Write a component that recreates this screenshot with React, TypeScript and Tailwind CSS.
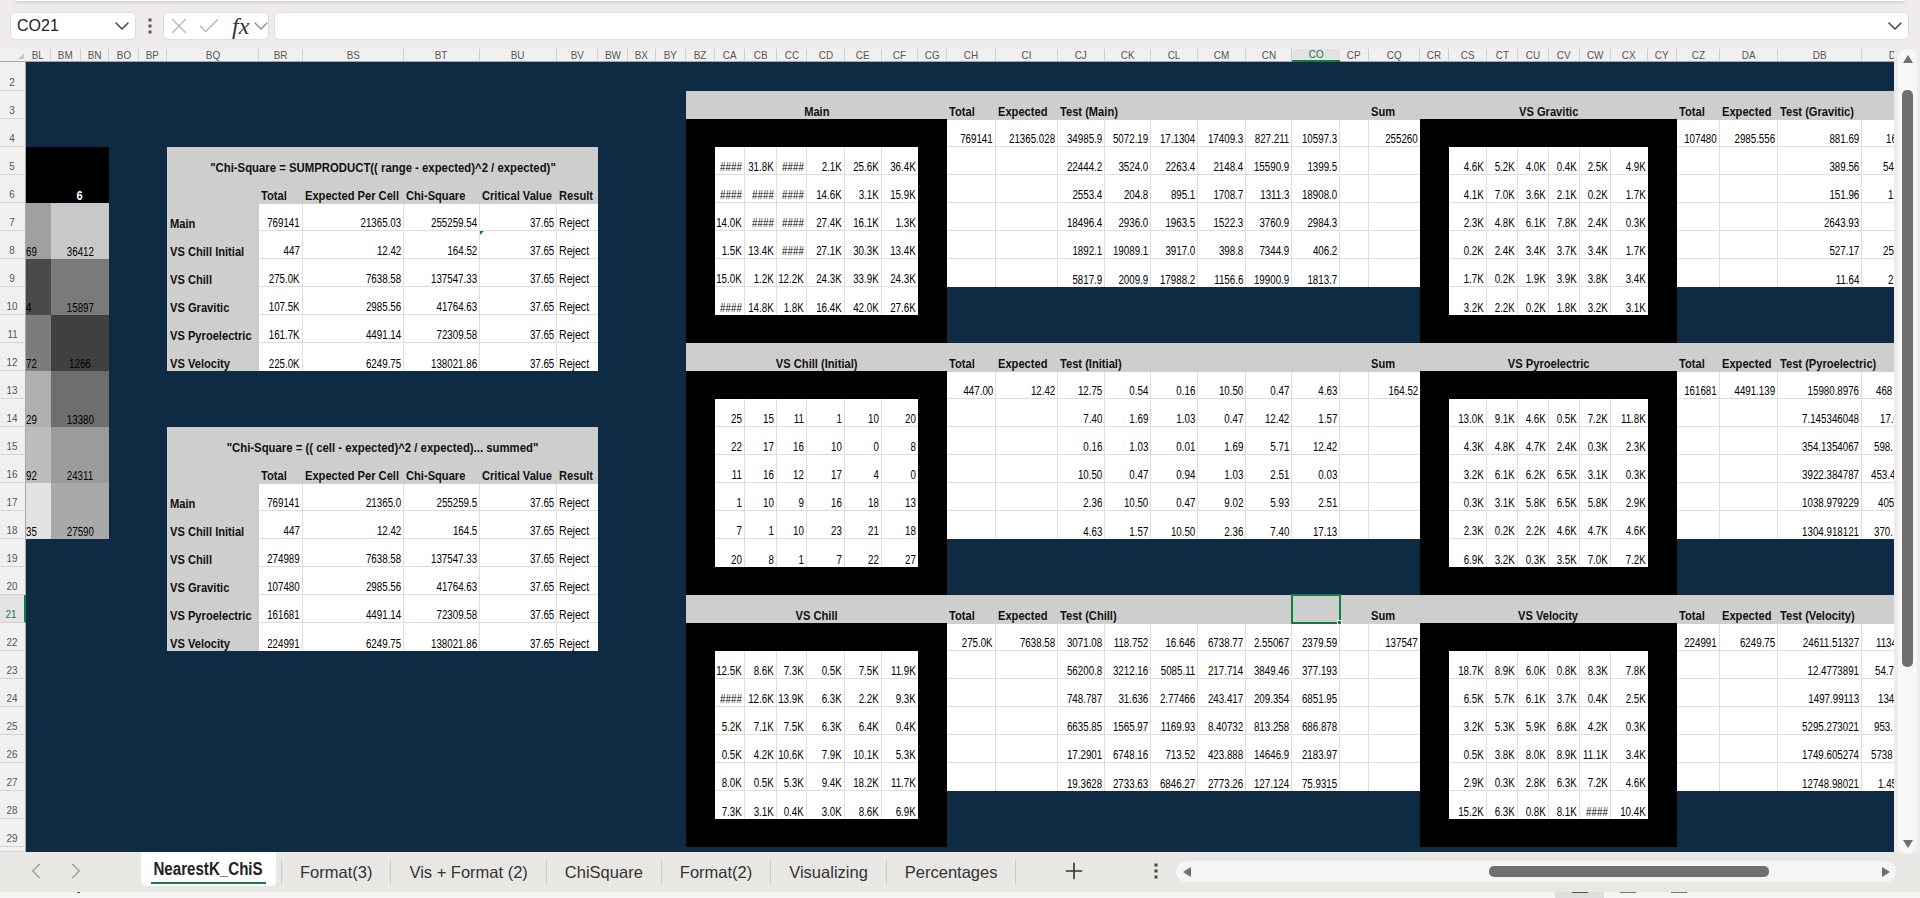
import React, { FC } from "react";
import { ChevronDown, ChevronLeft, ChevronRight, X, Check, Plus } from "lucide-react";

const cols = ["BL","BM","BN","BO","BP","BQ","BR","BS","BT","BU","BV","BW","BX","BY","BZ","CA","CB","CC","CD","CE","CF","CG","CH","CI","CJ","CK","CL","CM","CN","CO","CP","CQ","CR","CS","CT","CU","CV","CW","CX","CY","CZ","DA","DB","DC"];
const rowsList = Array.from({ length: 29 }, (_, i) => i + 2); // row 1 is scrolled away

type Kind = "blue" | "black" | "grey" | "white" | string;
interface Look {
  box: string;
  text: string;
}
interface CellData {
  kind: Kind;
  text?: string;
  look?: Look;
  span?: number;
}

// no condensed face is installed, so the narrow sheet font is squeezed with scale-x
const NUM: Look = { box: "justify-end pr-[2px] text-[12.5px] text-black", text: "origin-right scale-x-[0.78]" };
const LEFTNUM: Look = { box: "justify-start text-[12.5px] text-black", text: "origin-left scale-x-[0.78]" };
const REJECT: Look = { box: "justify-start pl-[2px] text-[12.5px] text-black", text: "origin-left scale-x-[0.85]" };
const MID: Look = { box: "justify-center text-[12.5px] text-black col-span-2", text: "origin-center scale-x-[0.78]" };
const MIDBOLD: Look = { box: "justify-center text-[13px] font-bold text-white col-span-2", text: "origin-center scale-x-[0.85]" };
const BOLD: Look = { box: "justify-start pl-[2px] font-bold text-[13px] text-[#111]", text: "origin-left scale-x-[0.856]" };
const ROWLABEL: Look = { box: "justify-start pl-[3px] font-bold text-[13px] text-[#111]", text: "origin-left scale-x-[0.856]" };
const TITLE: Look = { box: "justify-center font-bold text-[13px] text-[#111] col-span-6", text: "origin-center scale-x-[0.873]" };
const TITLE8: Look = { box: "justify-center font-bold text-[13px] text-[#111] col-span-8", text: "origin-center scale-x-[0.856]" };

const sheet = new Map<string, CellData>();
const at = (c: string, r: number) => c + r;
const colRange = (a: string, b: string) => cols.slice(cols.indexOf(a), cols.indexOf(b) + 1);

const fill = (a: string, b: string, r1: number, r2: number, kind: Kind) => {
  colRange(a, b).forEach((c) => {
    for (let r = r1; r <= r2; r++) sheet.set(at(c, r), { kind });
  });
};
const put = (c: string, r: number, text: string, look: Look = NUM, span?: number) => {
  const cell = sheet.get(at(c, r)) || { kind: "blue" };
  sheet.set(at(c, r), { ...cell, text, look, span });
};
const putRow = (start: string, r: number, values: string[]) => {
  const i = cols.indexOf(start);
  values.forEach((v, k) => put(cols[i + k], r, v));
};
const putGrid = (start: string, r: number, data: string) => {
  data.split("\n").forEach((line, k) => putRow(start, r + k, line.trim().split(/\s+/)));
};

// heat map strip on the left
fill("BL", "BN", 5, 6, "black");
put("BM", 6, "6", MIDBOLD, 2);
const heat: [string, string, string, string][] = [
  ["bg-[#a0a0a0]", "bg-[#c8c8c8]", "69", "36412"],
  ["bg-[#4a4a4a]", "bg-[#7a7a7a]", "4", "15897"],
  ["bg-[#7c7c7c]", "bg-[#404040]", "72", "1266"],
  ["bg-[#afafaf]", "bg-[#6e6e6e]", "29", "13380"],
  ["bg-[#bcbcbc]", "bg-[#9b9b9b]", "92", "24311"],
  ["bg-[#e2e2e2]", "bg-[#a9a9a9]", "35", "27590"],
];
heat.forEach((h, i) => {
  const r = 7 + i * 2;
  fill("BL", "BL", r, r + 1, h[0]);
  fill("BM", "BN", r, r + 1, h[1]);
  put("BL", r + 1, h[2], LEFTNUM);
  put("BM", r + 1, h[3], MID, 2);
});

// the two summary tables
const addSummary = (top: number, title: string, rows: string[][]) => {
  fill("BQ", "BV", top, top + 1, "grey");
  fill("BQ", "BQ", top + 2, top + 7, "grey");
  fill("BR", "BV", top + 2, top + 7, "white");
  put("BQ", top, title, TITLE, 6);
  ["Total", "Expected Per Cell", "Chi-Square", "Critical Value", "Result"].forEach((h, i) =>
    put(cols[cols.indexOf("BR") + i], top + 1, h, BOLD)
  );
  rows.forEach((row, i) => {
    const r = top + 2 + i;
    put("BQ", r, row[0], ROWLABEL);
    put("BR", r, row[1]);
    put("BS", r, row[2]);
    put("BT", r, row[3]);
    put("BU", r, "37.65");
    put("BV", r, "Reject", REJECT);
  });
};
addSummary(5, '"Chi-Square = SUMPRODUCT(( range - expected)^2 / expected)"', [
  ["Main", "769141", "21365.03", "255259.54"],
  ["VS Chill Initial", "447", "12.42", "164.52"],
  ["VS Chill", "275.0K", "7638.58", "137547.33"],
  ["VS Gravitic", "107.5K", "2985.56", "41764.63"],
  ["VS Pyroelectric", "161.7K", "4491.14", "72309.58"],
  ["VS Velocity", "225.0K", "6249.75", "138021.86"],
]);
addSummary(15, '"Chi-Square = (( cell - expected)^2 / expected)... summed"', [
  ["Main", "769141", "21365.0", "255259.5"],
  ["VS Chill Initial", "447", "12.42", "164.5"],
  ["VS Chill", "274989", "7638.58", "137547.33"],
  ["VS Gravitic", "107480", "2985.56", "41764.63"],
  ["VS Pyroelectric", "161681", "4491.14", "72309.58"],
  ["VS Velocity", "224991", "6249.75", "138021.86"],
]);

// the band of six blocks
const addBand = (head: number) => {
  fill("BZ", "DC", head, head, "grey");
  fill("BZ", "CG", head + 1, head + 8, "black");
  fill("CR", "CY", head + 1, head + 8, "black");
  fill("CA", "CF", head + 2, head + 7, "white");
  fill("CS", "CX", head + 2, head + 7, "white");
  fill("CH", "CQ", head + 1, head + 6, "white");
  fill("CZ", "DC", head + 1, head + 6, "white");
};
addBand(3);
addBand(12);
addBand(21);

const addHeads = (head: number, left: string, right: string, testL: string, testR: string) => {
  put("BZ", head, left, TITLE8, 8);
  put("CH", head, "Total", BOLD);
  put("CI", head, "Expected", BOLD);
  put("CJ", head, testL, BOLD);
  put("CQ", head, "Sum", BOLD);
  put("CR", head, right, TITLE8, 8);
  put("CZ", head, "Total", BOLD);
  put("DA", head, "Expected", BOLD);
  put("DB", head, testR, BOLD);
};
addHeads(3, "Main", "VS Gravitic", "Test (Main)", "Test (Gravitic)");
addHeads(12, "VS Chill (Initial)", "VS Pyroelectric", "Test (Initial)", "Test (Pyroelectric)");
addHeads(21, "VS Chill", "VS Velocity", "Test (Chill)", "Test (Velocity)");

putGrid("CA", 5, `#### 31.8K #### 2.1K 25.6K 36.4K
#### #### #### 14.6K 3.1K 15.9K
14.0K #### #### 27.4K 16.1K 1.3K
1.5K 13.4K #### 27.1K 30.3K 13.4K
15.0K 1.2K 12.2K 24.3K 33.9K 24.3K
#### 14.8K 1.8K 16.4K 42.0K 27.6K`);
putGrid("CJ", 4, `34985.9 5072.19 17.1304 17409.3 827.211 10597.3
22444.2 3524.0 2263.4 2148.4 15590.9 1399.5
2553.4 204.8 895.1 1708.7 1311.3 18908.0
18496.4 2936.0 1963.5 1522.3 3760.9 2984.3
1892.1 19089.1 3917.0 398.8 7344.9 406.2
5817.9 2009.9 17988.2 1156.6 19900.9 1813.7`);
putGrid("CS", 5, `4.6K 5.2K 4.0K 0.4K 2.5K 4.9K
4.1K 7.0K 3.6K 2.1K 0.2K 1.7K
2.3K 4.8K 6.1K 7.8K 2.4K 0.3K
0.2K 2.4K 3.4K 3.7K 3.4K 1.7K
1.7K 0.2K 1.9K 3.9K 3.8K 3.4K
3.2K 2.2K 0.2K 1.8K 3.2K 3.1K`);
putGrid("CA", 14, `25 15 11 1 10 20
22 17 16 10 0 8
11 16 12 17 4 0
1 10 9 16 18 13
7 1 10 23 21 18
20 8 1 7 22 27`);
putGrid("CJ", 13, `12.75 0.54 0.16 10.50 0.47 4.63
7.40 1.69 1.03 0.47 12.42 1.57
0.16 1.03 0.01 1.69 5.71 12.42
10.50 0.47 0.94 1.03 2.51 0.03
2.36 10.50 0.47 9.02 5.93 2.51
4.63 1.57 10.50 2.36 7.40 17.13`);
putGrid("CS", 14, `13.0K 9.1K 4.6K 0.5K 7.2K 11.8K
4.3K 4.8K 4.7K 2.4K 0.3K 2.3K
3.2K 6.1K 6.2K 6.5K 3.1K 0.3K
0.3K 3.1K 5.8K 6.5K 5.8K 2.9K
2.3K 0.2K 2.2K 4.6K 4.7K 4.6K
6.9K 3.2K 0.3K 3.5K 7.0K 7.2K`);
putGrid("CA", 23, `12.5K 8.6K 7.3K 0.5K 7.5K 11.9K
#### 12.6K 13.9K 6.3K 2.2K 9.3K
5.2K 7.1K 7.5K 6.3K 6.4K 0.4K
0.5K 4.2K 10.6K 7.9K 10.1K 5.3K
8.0K 0.5K 5.3K 9.4K 18.2K 11.7K
7.3K 3.1K 0.4K 3.0K 8.6K 6.9K`);
putGrid("CJ", 22, `3071.08 118.752 16.646 6738.77 2.55067 2379.59
56200.8 3212.16 5085.11 217.714 3849.46 377.193
748.787 31.636 2.77466 243.417 209.354 6851.95
6635.85 1565.97 1169.93 8.40732 813.258 686.878
17.2901 6748.16 713.52 423.888 14646.9 2183.97
19.3628 2733.63 6846.27 2773.26 127.124 75.9315`);
putGrid("CS", 23, `18.7K 8.9K 6.0K 0.8K 8.3K 7.8K
6.5K 5.7K 6.1K 3.7K 0.4K 2.5K
3.2K 5.3K 5.9K 6.8K 4.2K 0.3K
0.5K 3.8K 8.0K 8.9K 11.1K 3.4K
2.9K 0.3K 2.8K 6.3K 7.2K 4.6K
15.2K 6.3K 0.8K 8.1K #### 10.4K`);

put("CH", 4, "769141"); put("CI", 4, "21365.028"); put("CQ", 4, "255260");
put("CZ", 4, "107480"); put("DA", 4, "2985.556");
put("CH", 13, "447.00"); put("CI", 13, "12.42"); put("CQ", 13, "164.52");
put("CZ", 13, "161681"); put("DA", 13, "4491.139");
put("CH", 22, "275.0K"); put("CI", 22, "7638.58"); put("CQ", 22, "137547");
put("CZ", 22, "224991"); put("DA", 22, "6249.75");

["881.69", "389.56", "151.96", "2643.93", "527.17", "11.64"].forEach((v, i) => put("DB", 4 + i, v));
["15980.8976", "7.145346048", "354.1354067", "3922.384787", "1038.979229", "1304.918121"].forEach((v, i) => put("DB", 13 + i, v));
["24611.51327", "12.4773891", "1497.99113", "5295.273021", "1749.605274", "12748.98021"].forEach((v, i) => put("DB", 22 + i, v));

// DC is cut by the window, only the start of each number shows
const cut: [number, string, string][] = [
  [4, "16", "pl-[24px]"], [5, "54", "pl-[21px]"], [6, "1", "pl-[26px]"], [8, "25", "pl-[21px]"], [9, "2", "pl-[26px]"],
  [13, "468", "pl-[14px]"], [14, "17.0", "pl-[18px]"], [15, "598.", "pl-[12px]"], [16, "453.4", "pl-[9px]"], [17, "405", "pl-[16px]"], [18, "370.", "pl-[12px]"],
  [22, "1134", "pl-[14px]"], [23, "54.7", "pl-[13px]"], [24, "134", "pl-[16px]"], [25, "953.", "pl-[12px]"], [26, "5738", "pl-[9px]"], [27, "1.45", "pl-[16px]"],
];
cut.forEach(([r, v, pl]) => put("DC", r, v, { box: LEFTNUM.box + " " + pl, text: LEFTNUM.text }));

const isWhite = (c: string | undefined, r: number) => !!c && sheet.get(at(c, r))?.kind === "white";
const isGrey = (c: string, r: number) => sheet.get(at(c, r))?.kind === "grey";

const kindClass = (kind: Kind) => {
  if (kind === "blue") return "bg-[#0f2a43]";
  if (kind === "black") return "bg-black";
  if (kind === "grey") return "bg-[#cecece]";
  if (kind === "white") return "bg-white";
  return kind;
};

const Triangle: FC<{ dir: "up" | "down" | "left" | "right"; className?: string }> = ({ dir, className }) => {
  const points = { up: "5,1 10,9 0,9", down: "0,1 10,1 5,9", left: "9,0 9,10 1,5", right: "1,0 1,10 9,5" }[dir];
  return (
    <svg viewBox="0 0 10 10" className={className}>
      <polygon points={points} fill="#6f6f6f" />
    </svg>
  );
};

const Kebab: FC<{ color: string }> = ({ color }) => (
  <svg viewBox="0 0 4 16" className="w-[4px] h-[16px]">
    <rect x="0.5" y="0.5" width="3" height="3" fill={color} />
    <rect x="0.5" y="6.5" width="3" height="3" fill={color} />
    <rect x="0.5" y="12.5" width="3" height="3" fill={color} />
  </svg>
);

const SheetCell: FC<{ col: string; row: number }> = ({ col, row }) => {
  const cell = sheet.get(at(col, row)) || { kind: "blue" };
  const i = cols.indexOf(col);
  const lastCol = cols[i + (cell.span || 1) - 1];
  const white = cell.kind === "white";
  const right = white && isWhite(cols[cols.indexOf(lastCol) + 1], row) ? "border-r border-r-[#dedede]" : "";
  const bottom = white && isWhite(col, row + 1) ? "border-b border-b-[#dedede]" : "";
  const top = white && isGrey(col, row - 1) ? "border-t border-t-[#cecece]" : "";
  const selected = col === "CO" && row === 21;
  const flagged = col === "BU" && row === 8;
  return (
    <div
      className={`flex items-end leading-none whitespace-nowrap min-w-0 pb-[1px] ${kindClass(cell.kind)} ${right} ${bottom} ${top} ${cell.look?.box || ""} ${selected || flagged ? "relative" : ""}`}
    >
      {cell.text && <span className={`inline-block shrink-0 ${cell.look?.text || ""}`}>{cell.text}</span>}
      {selected && (
        <div className="absolute -inset-[1px] border-2 border-[#107c41] z-10">
          <div className="absolute -right-[3px] -bottom-[3px] w-[5px] h-[5px] bg-[#107c41] border border-white" />
        </div>
      )}
      {flagged && (
        <svg viewBox="0 0 4 4" className="absolute left-0 top-0 w-[4px] h-[4px]">
          <polygon points="0,0 4,0 0,4" fill="#107c41" />
        </svg>
      )}
    </div>
  );
};

const colHeadClass = (c: string) => {
  if (c === "CO") return "flex items-center justify-center text-[11px] leading-none bg-[#e3e3e3] text-[#107c41] border-b-2 border-b-[#107c41]";
  // DC is much wider than what is left of it on screen, so its name sits near the edge
  if (c === "DC") return "flex items-center justify-start pl-[26px] whitespace-nowrap text-[11px] leading-none bg-[#f0f0f0] text-[#555] border-b border-b-[#a6a6a6]";
  return "flex items-center justify-center text-[11px] leading-none bg-[#f0f0f0] text-[#555] border-r border-r-[#cfcfcf] border-b border-b-[#a6a6a6]";
};

const Sheet: FC = () => (
  <div className="grid w-[1894px] h-[803px] overflow-hidden shrink-0 grid-cols-[26px_25px_30px_28px_30px_28px_92px_44px_101px_76px_77px_41px_30px_28px_30px_29px_30px_32px_30px_38px_37px_36px_29px_49px_62px_47px_46px_47px_48px_46px_48px_29px_51px_29px_38px_31px_31px_31px_31px_37px_29px_43px_58px_84px_32px] grid-rows-[13px_29px_repeat(27,28px)_5px]">
    <div className="bg-[#f0f0f0] border-b border-b-[#a6a6a6] flex items-end justify-end">
      <svg viewBox="0 0 6 6" className="w-[6px] h-[6px] mb-[2px] mr-[2px]">
        <polygon points="6,0 6,6 0,6" fill="#c9c9c9" />
      </svg>
    </div>
    {cols.map((c) => (
      <div key={c} className={colHeadClass(c)}>
        <span className="inline-block shrink-0 scale-x-[0.9]">{c}</span>
      </div>
    ))}
    {rowsList.map((r) => (
      <React.Fragment key={r}>
        <div
          className={
            r === 21
              ? "flex items-end justify-center pb-[2px] pr-[2px] text-[11px] leading-none bg-[#e3e3e3] text-[#107c41] border-r-2 border-r-[#107c41] border-b border-b-[#cfcfcf]"
              : "flex items-end justify-center pb-[2px] text-[11px] leading-none bg-[#f0f0f0] text-[#555] border-r border-r-[#a6a6a6] border-b border-b-[#d4d4d4]"
          }
        >
          {r <= 29 ? <span className="inline-block scale-x-[0.9]">{r}</span> : ""}
        </div>
        {cols.map((c, i) => {
          // cells covered by a merged title or value on the left are not drawn
          for (let k = 1; k <= 7; k++) {
            const left = cols[i - k] && sheet.get(at(cols[i - k], r));
            if (left && left.span && left.span > k) return null;
          }
          return <SheetCell key={c} col={c} row={r} />;
        })}
      </React.Fragment>
    ))}
  </div>
);

const tabNames = ["Format(3)", "Vis + Format (2)", "ChiSquare", "Format(2)", "Visualizing", "Percentages"];

const TabBar: FC = () => (
  <div className="flex h-[40px] shrink-0 bg-[#e9e7e4]">
    <div className="flex w-[1050px] shrink-0">
      <div className="flex w-[141px] shrink-0 items-center h-[38px]">
        <ChevronLeft className="w-[26px] h-[26px] shrink-0 text-[#9a9a9a] ml-[23px]" strokeWidth={1.25} />
        <ChevronRight className="w-[26px] h-[26px] shrink-0 text-[#9a9a9a] ml-[14px]" strokeWidth={1.25} />
      </div>
      <div className="w-[135px] h-[34px] bg-white rounded-b-[5px] flex flex-col items-center shrink-0">
        <div className="text-[18px] leading-none mt-[8px] font-bold text-[#222] border-b-2 border-b-[#107c41] w-[115px] h-[24px] flex justify-center whitespace-nowrap">
          <span className="inline-block shrink-0 scale-x-[0.84]">NearestK_ChiS</span>
        </div>
      </div>
      <div className="flex ml-[5px]">
        <div className="w-px h-[24px] mt-[8px] bg-[#c9c9c9]" />
        {tabNames.map((t) => (
          <div key={t} className="h-[24px] mt-[8px] px-[18px] flex items-center text-[16.5px] text-[#333] border-r border-r-[#c9c9c9] whitespace-nowrap">
            {t}
          </div>
        ))}
      </div>
    </div>
    <div className="w-[48px] h-[38px] flex items-center justify-center">
      <Plus className="w-[26px] h-[26px] shrink-0 text-[#333]" strokeWidth={1.5} />
    </div>
    <div className="w-[4px] h-[38px] flex items-center ml-[56px]">
      <Kebab color="#444" />
    </div>
    <div className="w-[720px] h-[21px] mt-[9px] ml-[18px] rounded-full bg-[#f5f5f5] flex items-center">
      <Triangle dir="left" className="w-[10px] h-[10px] ml-[6px]" />
      <div className="w-[280px] h-[11px] rounded-[5px] bg-[#6f6f6f] ml-[297px]" />
      <Triangle dir="right" className="w-[10px] h-[10px] ml-[112px]" />
    </div>
  </div>
);

const App: FC = () => (
  <div className="w-[1920px] h-[898px] overflow-hidden flex flex-col bg-[#efebeb] font-['Liberation_Sans',sans-serif]">
    <div className="h-[1px] mx-[15px] bg-white shadow-[0_1px_3px_rgba(0,0,0,0.35)] shrink-0" />
    <div className="flex h-[28px] mt-[11px] mb-[9px] shrink-0">
      <div className="w-[126px] ml-[10px] bg-white rounded-[5px] border border-[#dcdcdc] flex items-center justify-between pl-[6px] pr-[1px] text-[16px] text-[#222]">
        CO21
        <ChevronDown className="w-[24px] h-[24px] shrink-0 text-[#444]" strokeWidth={1.5} />
      </div>
      <div className="w-[27px] flex items-center justify-center">
        <Kebab color="#555" />
      </div>
      <div className="w-[106px] bg-white rounded-[5px] border border-[#dcdcdc] flex items-center">
        <X className="w-[26px] h-[26px] shrink-0 ml-[2px] text-[#b5b5b5]" strokeWidth={1.25} />
        <Check className="w-[28px] h-[26px] shrink-0 ml-[3px] text-[#b5b5b5]" strokeWidth={1.25} />
        <span className="ml-[9px] text-[24px] leading-none italic font-['Liberation_Serif',serif] text-[#333] shrink-0">fx</span>
        <ChevronDown className="w-[24px] h-[24px] shrink-0 text-[#888]" strokeWidth={1.25} />
      </div>
      <div className="w-[1635px] ml-[5px] bg-white rounded-[5px] border border-[#dcdcdc] flex items-center justify-end pr-[1px]">
        <ChevronDown className="w-[24px] h-[24px] shrink-0 text-[#444]" strokeWidth={1.5} />
      </div>
    </div>
    <div className="flex h-[803px] shrink-0">
      <Sheet />
      <div className="relative z-10 w-[19px] h-[805px] ml-[4px] rounded-[9px] bg-[#f7f7f7] flex flex-col items-center shrink-0">
        <Triangle dir="up" className="w-[10px] h-[10px] mt-[5px]" />
        <div className="w-[11px] h-[577px] rounded-[5px] bg-[#6f6f6f] mt-[26px]" />
        <Triangle dir="down" className="w-[10px] h-[10px] mt-auto mb-[5px]" />
      </div>
    </div>
    <TabBar />
    <div className="flex h-[6px] bg-[#f7f5f3] shrink-0">
      <div className="w-[77px]" />
      <div className="w-[3px] h-[1px] bg-[#555]" />
      <div className="w-[1475px]" />
      <div className="w-[49px] bg-[#dedede] flex justify-center">
        <div className="w-[16px] h-[1px] bg-[#555]" />
      </div>
      <div className="w-[16px]" />
      <div className="w-[16px] h-[1px] bg-[#777]" />
      <div className="w-[35px]" />
      <div className="w-[16px] h-[1px] bg-[#777]" />
    </div>
  </div>
);

export default App;
